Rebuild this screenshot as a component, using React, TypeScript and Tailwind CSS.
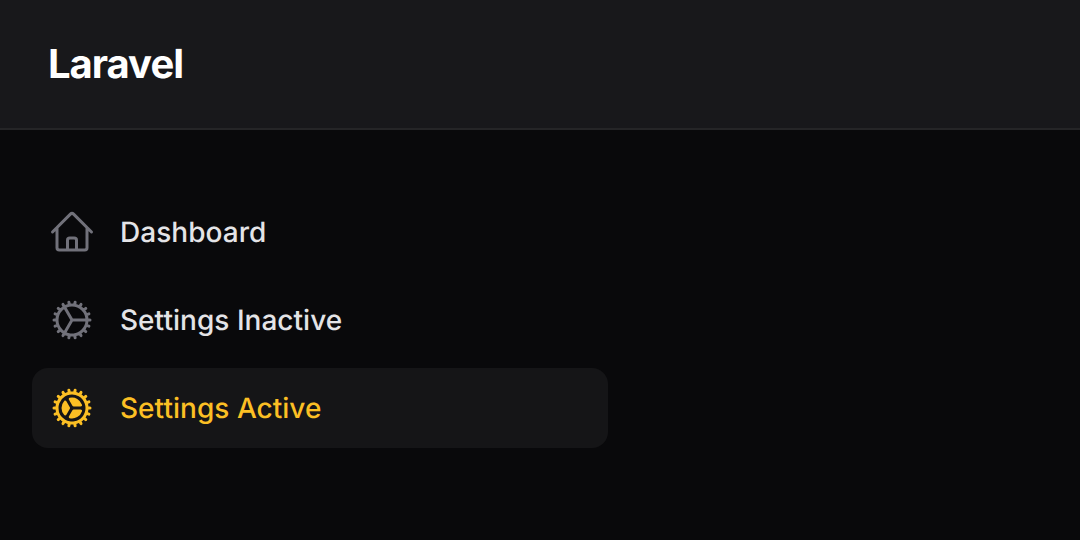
import { HiOutlineHome, HiOutlineCog, HiCog } from "react-icons/hi2";

const items = [
  { label: "Dashboard", Icon: HiOutlineHome, active: false },
  { label: "Settings Inactive", Icon: HiOutlineCog, active: false },
  { label: "Settings Active", Icon: HiCog, active: true },
];

export default function App() {
  return (
    <div className="flex h-[540px] w-[1080px] flex-col overflow-hidden bg-[#09090b] font-['Inter',sans-serif] antialiased [text-rendering:geometricPrecision]">
      <header className="flex h-[130px] shrink-0 items-center border-b-2 border-[#252527] bg-[#18181b] px-12">
        <div className="text-[40px] leading-[50px] font-bold tracking-[-1px] text-white">Laravel</div>
      </header>
      <nav className="mt-[62px] ml-8 flex w-[576px] flex-col gap-2">
        {items.map(({ label, Icon, active }) => (
          <a
            key={label}
            className={`flex h-20 items-center gap-6 rounded-2xl px-4 text-[28px] leading-10 font-medium tracking-[0.03px] ${active ? "bg-[#151517] text-[#fbbf24]" : "text-[#e4e4e7]"}`}
          >
            <Icon className={`size-12 shrink-0 ${active ? "text-[#fbbf24]" : "text-[#71717a]"}`} />
            {label}
          </a>
        ))}
      </nav>
    </div>
  );
}
